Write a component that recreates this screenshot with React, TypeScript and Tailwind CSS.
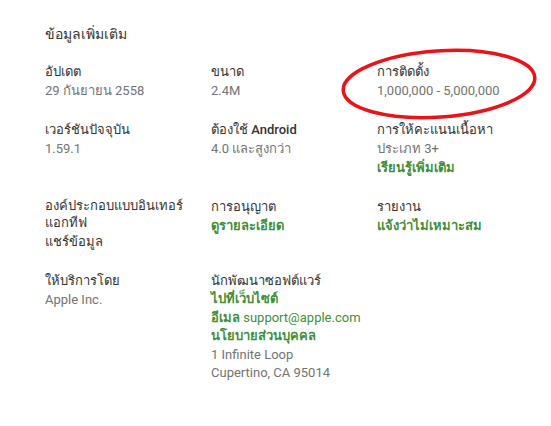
import React from "react";

function Label({ children }: { children: React.ReactNode }) {
  return <div className="text-[13px] leading-[19px] font-medium text-[#333333]">{children}</div>;
}
function Value({ children }: { children: React.ReactNode }) {
  return <div className="text-[13px] leading-[19px] text-[#737373]">{children}</div>;
}
function Link({ children }: { children: React.ReactNode }) {
  return <div className="text-[13px] leading-[19px] font-bold text-[#3f8f3a]">{children}</div>;
}

export default function App() {
  return (
    <div className="relative w-[551px] h-[426px] bg-white overflow-hidden font-[family-name:Roboto,'Liberation_Sans',sans-serif]">
      <div className="pl-[45px] pt-[24px]">
        <div className="text-[14px] leading-[20px] font-medium text-[#333333]">ข้อมูลเพิ่มเติม</div>
        <div className="grid grid-cols-[166px_166px_166px] gap-y-[20px] mt-[18px]">
          <div>
            <Label>อัปเดต</Label>
            <Value>29 กันยายน 2558</Value>
          </div>
          <div>
            <Label>ขนาด</Label>
            <Value>2.4M</Value>
          </div>
          <div>
            <Label>การติดตั้ง</Label>
            <Value>1,000,000 - 5,000,000</Value>
          </div>

          <div>
            <Label>เวอร์ชันปัจจุบัน</Label>
            <Value>1.59.1</Value>
          </div>
          <div>
            <Label>ต้องใช้ Android</Label>
            <Value>4.0 และสูงกว่า</Value>
          </div>
          <div>
            <Label>การให้คะแนนเนื้อหา</Label>
            <Value>ประเภท 3+</Value>
            <Link>เรียนรู้เพิ่มเติม</Link>
          </div>

          <div className="pr-[20px]">
            <div className="text-[13px] leading-[17px] font-medium text-[#333333]">องค์ประกอบแบบอินเทอร์แอกทีฟ</div>
            <div className="text-[13px] leading-[19px] font-medium text-[#333333] mt-[1px]">แชร์ข้อมูล</div>
          </div>
          <div>
            <Label>การอนุญาต</Label>
            <Link>ดูรายละเอียด</Link>
          </div>
          <div>
            <Label>รายงาน</Label>
            <Link>แจ้งว่าไม่เหมาะสม</Link>
          </div>

          <div>
            <Label>ให้บริการโดย</Label>
            <Value>Apple Inc.</Value>
          </div>
          <div className="col-span-2">
            <Label>นักพัฒนาซอฟต์แวร์</Label>
            <div className="text-[13px] leading-[18.5px] font-bold text-[#3f8f3a]">ไปที่เว็บไซต์</div>
            <div className="text-[13px] leading-[18.5px] font-bold text-[#3f8f3a]">
              อีเมล <span className="font-normal">support@apple.com</span>
            </div>
            <div className="text-[13px] leading-[18.5px] font-bold text-[#3f8f3a]">นโยบายส่วนบุคคล</div>
            <div className="text-[13px] leading-[18.5px] text-[#737373]">1 Infinite Loop</div>
            <div className="text-[13px] leading-[18.5px] text-[#737373]">Cupertino, CA 95014</div>
          </div>
        </div>
      </div>
      <svg className="absolute left-0 top-0 pointer-events-none" width="551" height="426">
        <ellipse cx="439" cy="84" rx="96" ry="33" fill="none" stroke="#e8141a" strokeWidth="3.5" transform="rotate(-4 439 84)" />
      </svg>
    </div>
  );
}
